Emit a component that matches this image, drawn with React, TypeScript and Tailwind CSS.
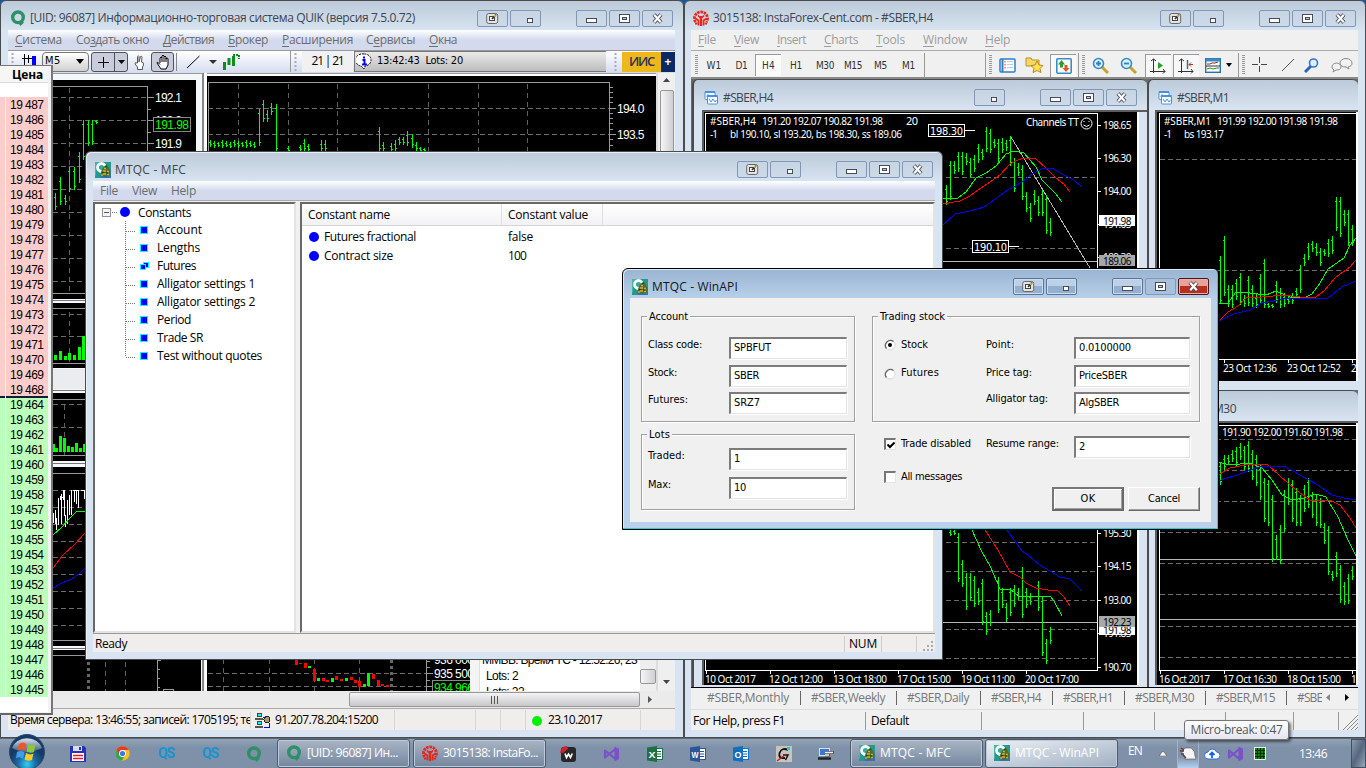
import React, { useLayoutEffect, useRef } from "react";

const SEGOE = "font-['Open_Sans','Noto_Sans',sans-serif]";
const TAHOMA = "font-['DejaVu_Sans_Condensed','DejaVu_Sans',sans-serif]";

/* Single-line text whose tracking is tuned so that it takes exactly w pixels. */
function Fit({ w, children, u = -1, className = "" }: { w: number; children: string; u?: number; className?: string }) {
  const ref = useRef<HTMLSpanElement>(null);
  useLayoutEffect(() => {
    const el = ref.current;
    if (!el) return;
    el.style.letterSpacing = "0px";
    const natural = el.getBoundingClientRect().width;
    el.style.letterSpacing = `${(w - natural) / children.length}px`;
  }, [w, children]);
  return (
    <span ref={ref} className={`inline-block shrink-0 whitespace-pre ${className}`}>
      {u < 0 ? children : (
        <>
          {children.slice(0, u)}
          <span className="underline underline-offset-2">{children[u]}</span>
          {children.slice(u + 1)}
        </>
      )}
    </span>
  );
}

/* ---------- icons ---------- */
const MtqcIcon = () => (
  <svg width="16" height="16" viewBox="0 0 16 16" className="shrink-0">
    <rect width="16" height="16" fill="#23998f" />
    <path d="M16 8v8H6l-1-3z" fill="#2f75b5" />
    <path d="M0 0h5L1 5v8l-1 1z" fill="#49b5a0" />
    <circle cx="6.500" cy="5.500" r="4" stroke="#f6fbfb" strokeWidth="2.800" fill="#3fa596" />
    <path d="M6 10l1.500-3.500L9.500 4l2.500-1.500L14 6l1.500 4-1 3.500-4.500 1.500-4-2z" fill="#4d6f2c" />
    <path d="M9 6.500h2M8 9h3M12 9.500h2M8 12h3M12 12.500h2M6 13h2" stroke="#d9ac30" strokeWidth="1.300" />
    <path d="M10 5l2-1M7 10.500h2M11 11h2" stroke="#1d3e22" strokeWidth="1" />
  </svg>
);
const QuikIcon = () => (
  <svg width="16" height="16" viewBox="0 0 16 16" className="shrink-0">
    <circle cx="8" cy="7.300" r="5.300" fill="none" stroke="#2f8f68" strokeWidth="3.400" />
    <path d="M6.500 12l5-1 2.500 1.500-3.500 3.500L9 14z" fill="#2f8f68" />
  </svg>
);
const InstaIcon = () => (
  <svg width="16" height="16" viewBox="0 0 16 16" className="shrink-0" fill="none" stroke="#e8261c">
    <path d="M8 16V6" strokeWidth="2.200" />
    <path d="M8 8.500L5 5.500M8 8.500l3-3M5.500 15.500V10.500L2.500 8.500M10.500 15.500V10.500l3-2" strokeWidth="1.700" />
    <path d="M2.600 12A6.500 6.500 0 1 1 13.400 12" strokeWidth="2.800" strokeDasharray="2.500 .8" />
    <path d="M2 13.500h2.500M11.500 13.500H14" strokeWidth="1.800" />
  </svg>
);
const ChildIcon = () => (
  <svg width="15" height="15" viewBox="0 0 15 15" className="shrink-0" fill="#fff" stroke="#4a90e0">
    <rect x="1" y="1.500" width="10" height="8" rx="1" />
    <path d="M1 2h10" strokeWidth="2" /><path d="M2.500 6.500l1.500-2 1.500 2" fill="none" />
    <rect x="3.500" y="5.500" width="10" height="8.500" rx="1" />
    <path d="M3.500 6h10" strokeWidth="2" />
    <path d="M5 9l2 3 2-3 2 3 1.500-2" fill="none" />
  </svg>
);

/* ---------- window chrome ---------- */
type Kind = "pin" | "tray" | "min" | "max" | "close";
function CapGlyph({ kind }: { kind: Kind }) {
  return (
    <svg width="29" height="15" viewBox="0 0 29 15" fill="none" shapeRendering="crispEdges">
      {kind === "pin" && (
        <g shapeRendering="auto">
          <rect x="8.700" y="2.500" width="11" height="10" rx="2" fill="#e4e4e4" stroke="#666" />
          <rect x="11.500" y="5.500" width="5" height="4" fill="#fff" stroke="#444" />
          <path d="M14 8l4-4.500" stroke="#333" strokeWidth="1.800" /><path d="M16 5.500l1.500-1.700" stroke="#f0cc30" strokeWidth="1.400" />
        </g>
      )}
      {kind === "tray" && <rect x="16.500" y="7.500" width="5" height="4" fill="#fff" stroke="#474b5c" />}
      {kind === "min" && <rect x="9.500" y="7.500" width="10" height="4" rx="1" fill="#fff" stroke="#474b5c" />}
      {kind === "max" && (<>
        <rect x="9.500" y="3.500" width="10" height="8" fill="#fff" stroke="#474b5c" />
        <rect x="12.500" y="6.500" width="4" height="2" fill="#b8c6d8" stroke="#474b5c" />
      </>)}
      {kind === "close" && (
        <g shapeRendering="auto">
          <path d="M11 3.500l7 8M18 3.500l-7 8" stroke="#474b5c" strokeWidth="4" />
          <path d="M11.200 3.800l6.600 7.400M17.800 3.800l-6.600 7.400" stroke="#fff" strokeWidth="2.200" />
        </g>
      )}
    </svg>
  );
}
function CapButton({ kind, active }: { kind: Kind; active?: boolean }) {
  const look = active
    ? kind === "close"
      ? "border-[#4c1620] bg-linear-to-b from-[#e5a399] from-45% to-[#b8301c] to-50% shadow-[inset_0_0_0_1px_#e8b0a4]"
      : kind === "max"
        ? "border-[#8299b8] bg-[#a9c0dc]"
        : "border-[#5c7596] bg-linear-to-b from-[#bdd0e6] from-45% to-[#93b0d0] to-50% shadow-[inset_0_0_0_1px_#c9dcf0]"
    : "border-[#8296b8] bg-[#c8d5e5]/60";
  return (
    <span className={`flex h-[17px] w-[31px] items-center justify-center rounded-[2px] border ${look}`}>
      <CapGlyph kind={kind} />
    </span>
  );
}
function CapButtons({ kinds = ["pin", "tray", "min", "max", "close"], active }: { kinds?: Kind[]; active?: boolean }) {
  return (
    <div className="ml-auto flex gap-[2px]">
      {kinds.map((k) => (
        <span key={k} className={k === "min" ? "ml-[33px]" : ""}>
          <CapButton kind={k} active={active} />
        </span>
      ))}
    </div>
  );
}

/* ---------- chart helpers ---------- */
function Plot({ x, y, w, h, children }: { x: number; y: number; w: number; h: number; children: React.ReactNode }) {
  return (
    <svg width={w} height={h} viewBox={`${x} ${y} ${w} ${h}`} className="block shrink-0" shapeRendering="crispEdges" fill="none">
      {children}
    </svg>
  );
}
const snap = (v: number) => Math.floor(v) + 0.5;
const barPath = (d: number[][]) =>
  d.map(([x, a, b]) => {
    const s = snap(x);
    const q = Math.min(4, (b - a) / 3);
    return `M${s} ${a}V${b}M${s - 1.5} ${snap(a + q)}h1.500M${s} ${snap(b - q)}h1.500`;
  }).join("");
const Bars = ({ d }: { d: number[][] }) => <path d={barPath(d)} stroke="#0f0" />;
const Line = ({ p, c }: { p: string; c: string }) => <polyline points={p} stroke={c} strokeWidth="1" />;
const HDash = ({ ys, x1, x2 }: { ys: number[]; x1: number; x2: number }) => (
  <path d={ys.map((y) => `M${x1} ${snap(y)}H${x2}`).join("")} stroke="#6c6c6c" strokeDasharray="5 3" />
);
const VDash = ({ xs, y1, y2 }: { xs: number[]; y1: number; y2: number }) => (
  <path d={xs.map((x) => `M${snap(x)} ${y1}V${y2}`).join("")} stroke="#606060" strokeDasharray="5 4" />
);
function Lab({ x, y, w, t, c = "#fff", s = 10, f = "Noto Sans" }: { x: number; y: number; w: number; t: string; c?: string; s?: number; f?: string }) {
  return <text x={x} y={y} textLength={w} fontSize={s} fill={c} fontFamily={`${f}, sans-serif`} xmlSpace="preserve">{t}</text>;
}
function Prices({ items }: { items: [string, number][] }) {
  return (<>
    {items.map(([t, y]) => (
      <g key={t}>
        <path d={`M1098 ${snap(y)}h3`} stroke="#fff" />
        <Lab x={1103} y={y + 4} w={28.500} t={t} />
      </g>
    ))}
  </>);
}
function Times({ items, tick, y }: { items: [string, number, number][]; tick: number; y: number }) {
  return (<>
    {items.map(([t, x, w]) => (
      <g key={t + x}>
        <path d={`M${x + 1.5} ${tick}v3`} stroke="#fff" />
        <Lab x={x} y={y} w={w} t={t} />
      </g>
    ))}
  </>);
}

/* ---------- QUIK charts ---------- */
const volA = [[55, 355], [60, 351], [65, 356], [69, 353], [74, 355], [79, 347], [83, 336]];
const volB = [[53, 444], [56, 448], [60, 436], [64, 438], [68, 446], [72, 447], [76, 443], [80, 448], [84, 444]];
const QuikLeft = () => (
  <Plot x={8} y={73} w={199} h={618}>
    <rect x="8" y="73" width="199" height="618" fill="#f4f8fb" />
    <path d="M8 73.500H203" stroke="#999" />
    <rect x="8" y="80" width="188" height="219" fill="#000" />
    <path d="M8 86.500H147.500V293.500H8" stroke="#999" />
    <HDash ys={[97, 120, 143, 166, 189, 212, 235, 258, 281]} x1={53} x2={147} />
    <VDash xs={[69]} y1={88} y2={293} />
    <path d="M148 97.500h6M148 120.500h6M148 143.500h6M148 109.500h3M148 132.500h3" stroke="#999" />
    <Bars d={[[55, 193, 210], [60, 177, 205], [65, 195, 205], [69, 167, 192], [74, 167, 190], [79, 152, 183], [83, 120, 160], [88, 120, 146], [92, 120, 145], [96, 120, 124]]} />
    <Lab x={155} y={102} w={27} t="192.1" s={12} f="Liberation Sans" />
    <Lab x={155} y={125} w={27} t="192.0" s={12} f="Liberation Sans" />
    <Lab x={155} y={148} w={27} t="191.9" s={12} f="Liberation Sans" />
    <rect x="153.500" y="117.500" width="37" height="14" fill="#000" stroke="#888" />
    <Lab x={155} y={129} w={34} t="191.98" c="#0f0" s={12} f="Liberation Sans" />
    <path d="M8 300.500H85M8 390.500H85" stroke="#777" />
    <rect x="8" y="303" width="188" height="65" fill="#000" />
    <path d="M8 308.500H85M8 363.500H85" stroke="#999" />
    <HDash ys={[314, 336]} x1={53} x2={86} />
    <VDash xs={[69]} y1={312} y2={363} />
    <path d={volA.map(([x, y]) => `M${x + 0.5} ${y}V360`).join("")} stroke="#0f0" strokeWidth="3" />
    <rect x="8" y="369" width="188" height="20" fill="#ebecef" />
    <rect x="8" y="393" width="188" height="68" fill="#000" />
    <path d="M8 399.500H86M8 455.500H86" stroke="#999" />
    <HDash ys={[404, 427]} x1={53} x2={86} />
    <VDash xs={[64]} y1={405} y2={455} />
    <path d={volB.map(([x, y]) => `M${x + 0.5} ${y}V452`).join("")} stroke="#0f0" strokeWidth="3" />
    <path d="M8 463.500H86" stroke="#777" />
    <rect x="8" y="467" width="188" height="179" fill="#000" />
    <path d="M8 473.500H86M8 640.500H86" stroke="#999" />
    <HDash ys={[490, 507, 524, 541, 557, 574, 591, 608, 625]} x1={53} x2={86} />
    <path d="M53.500 513v10M55.500 510v14M56.500 518v12M58.500 498v27M60.500 496v4M61.500 494v30M63.500 490v10M64.500 490v26M65.500 515v12M67.500 500v24M69.500 495v20M71.500 490v25M74.500 490v12M76.500 490v14M78.500 490v18M80.500 490h5M84.500 490v9M60 497h4M73 490.500h5" stroke="#fff" />
    <Line c="#0f0" p="53,535 62,527 70,518 77,511 85,512" />
    <Line c="#f00" p="53,568 63,555 75,544 85,533" />
    <Line c="#00f" p="53,588 62,583 72,579 79,574 85,568" />
    <path d="M8 648.500H86" stroke="#777" />
    <rect x="8" y="650" width="193" height="41" fill="#000" />
    <path d="M8 655.500H157M157.500 655V691M157 660.500h4M157 669.500h3M157 678.500h3M157 687.500h3M163 691v-1.500h10v2" stroke="#999" />
    <path d="M88.500 662V691" stroke="#666" strokeWidth="3" strokeDasharray="3 3" />
    <VDash xs={[105, 125]} y1={662} y2={691} />
    <path d="M203 73V691" stroke="#888" strokeWidth="2" />
    <path d="M205.500 73V691" stroke="#fff" strokeWidth="2" />
  </Plot>
);
const candles: [number, number, number, string][] = [
  [295, 659, 665, "#f00"], [299, 663, 664, "#f00"], [304, 663, 668, "#f00"], [308, 666, 668, "#0f0"], [313, 669, 681, "#f00"], [317, 678, 681, "#0f0"],
  [322, 678, 681, "#f00"], [326, 680, 682, "#f00"], [331, 678, 682, "#0f0"], [335, 676, 680, "#f00"], [340, 679, 681, "#f00"], [345, 678, 681, "#0f0"],
  [350, 677, 680, "#f00"], [354, 680, 683, "#f00"], [358, 681, 687, "#f00"], [363, 684, 687, "#0f0"], [367, 673, 686, "#0f0"], [372, 674, 679, "#f00"],
  [377, 680, 686, "#f00"], [381, 684, 686, "#f00"], [386, 685, 687, "#f00"],
];
const tickRow = Array.from({ length: 12 }, (_, i) => [210 + i * 4, 140 + (i % 3), 147 + (i % 2)]);
const QuikRight = () => (
  <Plot x={207} y={73} w={449} h={586}>
    <rect x="207" y="73" width="449" height="586" fill="#fff" />
    <path d="M207 73.500H656" stroke="#999" />
    <rect x="207" y="76" width="449" height="583" fill="#000" />
    <path d="M208.500 152V82.500H609.500V152" stroke="#999" />
    <HDash ys={[108, 134]} x1={208} x2={609} />
    <VDash xs={[238, 288, 337, 428, 478, 527]} y1={84} y2={152} />
    <path d="M610 108.500h6M610 134.500h6M610 87.500h3M610 92.500h3M610 97.500h3M610 102.500h3M610 113.500h3M610 118.500h3M610 123.500h3M610 129.500h3M610 139.500h3M610 145.500h3" stroke="#999" />
    <Bars d={tickRow} />
    <Bars d={[[259, 109, 146], [263, 100, 122], [267, 110, 122], [271, 103, 115], [276, 104, 152], [288, 146, 152], [300, 145, 152], [304, 139, 152], [308, 144, 152], [321, 140, 152], [325, 140, 152]]} />
    <Bars d={[[379, 127, 152], [383, 142, 152], [391, 143, 152], [395, 140, 152], [399, 137, 145], [403, 137, 145], [407, 131, 146], [412, 134, 148], [416, 142, 152], [420, 147, 152], [424, 148, 152]]} />
    <Lab x={617} y={113} w={27.500} t="194.0" s={12} f="Liberation Sans" />
    <Lab x={617} y={139} w={27.500} t="193.5" s={12} f="Liberation Sans" />
  </Plot>
);
const QuikRightBottom = () => (
  <Plot x={207} y={659} w={263} h={32}>
    <rect x="207" y="659" width="263" height="32" fill="#000" />
    <HDash ys={[673, 686]} x1={208} x2={427} />
    <VDash xs={[223, 269, 314, 359]} y1={659} y2={691} />
    <path d="M391.500 660V691" stroke="#666" strokeWidth="3" strokeDasharray="3 3" />
    {candles.map(([x, a, b, c]) => <rect key={x} x={x} y={a} width="3" height={b - a} fill={c} />)}
    <path d="M426.500 659V691M427 661.500h3M427 667.500h3M427 673.500h6M427 680.500h3M427 686.500h6" stroke="#999" />
    <Lab x={434} y={664} w={40} t="936 000" s={12} f="Liberation Sans" />
    <Lab x={434} y={678} w={40} t="935 500" s={12} f="Liberation Sans" />
    <rect x="432.500" y="680.500" width="50" height="13" fill="#000" stroke="#888" />
    <Lab x={434} y={692} w={40} t="934 966" c="#0f0" s={12} f="Liberation Sans" />
  </Plot>
);

/* ---------- QUIK window ---------- */
const quikMenu: [string, number, number, number][] = [
  ["Система", 47, 0, 14], ["Создать окно", 73, 2, 14], ["Действия", 51, 0, 14], ["Брокер", 40, 0, 14],
  ["Расширения", 71, 0, 13], ["Сервисы", 49, 1, 14], ["Окна", 28, 0, 0],
];
const Grip = () => (
  <svg width="3" height="20" className="shrink-0"><path d="M1.500 1V20" stroke="#a8aab8" strokeWidth="2" strokeDasharray="2 2" /></svg>
);
function QuikWindow() {
  return (
    <section className="absolute top-0 left-0 flex h-[738px] w-[684px] flex-col rounded-t-md border border-[#4b4b4b] bg-[#d8e4f1] bg-linear-to-b from-[#bccad9] to-[#d8e4f1] to-[30px] px-[7px] pb-[7px]">
      <header className="flex h-[29px] shrink-0 items-center pt-[6px] pr-[3px] pb-[1px] pl-[2px] text-xs text-[#3e4450]">
        <QuikIcon />
        <Fit w={385} className="ml-1">[UID: 96087] Информационно-торговая система QUIK (версия 7.5.0.72)</Fit>
        <CapButtons />
      </header>
      <nav className="flex h-5 w-[667px] shrink-0 items-center bg-linear-to-b from-white to-[#d3daee] to-50% pl-[7px] text-xs text-[#6d6d6d]">
        {quikMenu.map(([t, w, u, gap]) => (
          <span key={t} className="flex"><Fit w={w} u={u}>{t}</Fit><i className="block" style={{ width: gap }} /></span>
        ))}
      </nav>
      <div className="flex h-[23px] w-[667px] shrink-0 items-center border-t border-[#9a9a9a] bg-linear-to-b from-white to-[#d5dcf0] pb-px text-xs text-black">
        <span className="ml-[3px]"><Grip /></span>
        <svg width="20" height="20" className="ml-[3px] shrink-0" fill="none" shapeRendering="crispEdges">
          <path d="M7.500 2v18M5 6.500h12M11.500 3v8" stroke="#000" /><path d="M10 14h4v5" stroke="#e00" strokeWidth="2" /><rect x="15" y="4" width="4" height="14" fill="#00f" />
        </svg>
        <div className={`flex h-5 w-[47px] items-center justify-between rounded-sm border border-[#777] bg-linear-to-b from-white to-[#d0d0d0] pr-1 pl-[2px] ${TAHOMA} ml-[5px] text-[11px]`}>
          <Fit w={16}>M5</Fit>
          <svg width="8" height="5"><path d="M0 0h8L4 5z" fill="#000" /></svg>
        </div>
        <div className="ml-[2px] flex h-5 w-[37px] items-center rounded-[3px] border border-[#4d5060] bg-[#c9cddb]">
          <svg width="22" height="18" shapeRendering="crispEdges"><path d="M11.500 4v11M6 9.500h11" stroke="#000" /></svg>
          <span className="flex h-full flex-1 items-center justify-center border-l border-[#4d5060]"><svg width="7" height="4"><path d="M0 0h7L3.500 4z" /></svg></span>
        </div>
        <svg width="14" height="18" viewBox="0 0 14 18" className="ml-[4px] shrink-0" fill="#fff" stroke="#555">
          <path d="M5.500 10V3.500q1-1.500 1.500 0V9l1.500-5.500q1.500-1 1.500 1L9.500 9q2.500 0 2 3l-1 2v2.500h-5V14L3 11q-.5-2 2.500-1" />
        </svg>
        <div className="ml-[5px] flex h-5 w-[23px] items-center justify-center rounded-[3px] border border-[#4d5060] bg-[#c9cddb]">
          <svg width="14" height="16" viewBox="0 0 14 16" fill="#fff" stroke="#000">
            <path d="M4 9V4q1-2 2 0V2q1-2 2 0v1q1-2 2 0v2q2-2 2 0v6l-2 4H5L1 9q0-2 3 1.500M6 4v4M8 3v5M10 4v4" />
          </svg>
        </div>
        <span className="ml-[2px] h-[18px] w-px bg-[#888]" />
        <svg width="15" height="14" className="ml-[9px] shrink-0"><path d="M1 13L13.500 1" stroke="#000" /></svg>
        <svg width="8" height="4" className="ml-2 shrink-0"><path d="M0 0h8L4 4z" fill="#333" /></svg>
        <svg width="17" height="17" className="ml-[6px] shrink-0" fill="#0a8f1c"><path d="M0 9h3v8H0zM4.500 5h3v7h-3zM9 3h3v10H9z" /><path d="M10 2h6v4" fill="none" stroke="#0a8f1c" strokeWidth="2" strokeDasharray="2 1" /></svg>
        <span className="ml-[50px] h-[21px] w-px bg-[#999]" />
        <span className="ml-[3px]"><Grip /></span>
        <div className="ml-[5px] flex h-[21px] w-[51px] items-center justify-center bg-[#f1f1f3] pb-px"><Fit w={32}>21 | 21</Fit></div>
        <div className={`ml-px flex h-[21px] w-[252px] items-center border border-r-0 border-[#777] bg-linear-to-b from-[#eaeaea] to-[#bdbdbd] pl-[1px] ${TAHOMA} text-[11px]`}>
          <svg width="16" height="17" viewBox="0 0 16 17"><path d="M8 1a7 6 0 0 0-3 12l3 3 1-3A6.500 6 0 0 0 8 1z" fill="#fff" stroke="#000" strokeDasharray="2 1" /><path d="M8 3.500v2M6.500 7h2v4M6 11.500h5" stroke="#00f" strokeWidth="2" fill="none" /></svg>
          <Fit w={86} className="ml-[5px]">13:42:43  Lots: 20</Fit>
        </div>
        <span className="ml-2"><Grip /></span>
        <span className="ml-[5px] flex h-5 w-[39px] items-center justify-center bg-[#edb81c] text-[13px] font-semibold text-[#2c3355]"><Fit w={25}>ИИС</Fit></span>
        <span className="flex h-5 flex-1 items-center justify-center bg-[#0b2a63] text-[12px] font-bold text-white">+</span>
      </div>
      <div className="flex h-[618px] w-[667px] shrink-0 bg-[#f0f0f0]">
        <QuikLeft />
        <div className="flex w-[449px] flex-col">
          <QuikRight />
          <div className="flex h-8 overflow-hidden">
            <QuikRightBottom />
            <div className="w-[10px] shrink-0 border-r border-[#ddd] bg-[#f4f4f4]" />
            <div className="flex w-[160px] shrink-0 flex-col items-start overflow-hidden bg-white pl-[2px] font-['Liberation_Sans',sans-serif] text-[12px] leading-[14px] text-black">
              <Fit w={155} className="-mt-[6px] h-[14px]">MMBB: Время ТС - 12:52:26; 23</Fit>
              <Fit w={32} className="mt-[2px] ml-1 h-[14px]">Lots: 2</Fit>
              <Fit w={38} className="mt-[2px] ml-1 h-[14px]">Lots: 22</Fit>
            </div>
            <div className="flex-1 bg-[#eee] pt-[10px]"><div className="h-[15px] rounded-[2px] border border-[#979797] bg-linear-to-r from-[#f5f5f5] to-[#d0d0d4]" /></div>
          </div>
        </div>
        <div className="flex flex-1 flex-col items-center border-l-2 border-[#ddd] bg-[#efefef] pt-[5px]">
          <svg width="7" height="4"><path d="M0 4h7L3.500 0z" fill="#444" /></svg>
          <div className="mt-[8px] h-[500px] w-[14px] rounded-[2px] border border-[#979797] bg-linear-to-r from-[#f5f5f5] to-[#cfcfd3]" />
          <svg width="7" height="4" className="mt-auto mb-[7px]"><path d="M0 0h7L3.500 4z" fill="#444" /></svg>
        </div>
      </div>
      <div className="flex h-[17px] w-[667px] shrink-0 items-center bg-[#ebebeb] pl-[341px]">
        <div className="flex h-[15px] w-[291px] items-center justify-center gap-[2px] rounded-[2px] border border-[#979797] bg-linear-to-b from-[#f4f4f4] to-[#c8c8cc]">
          <i className="h-2 w-px bg-[#555]" /><i className="h-2 w-px bg-[#555]" /><i className="h-2 w-px bg-[#555]" />
        </div>
        <svg width="4" height="7" className="ml-2"><path d="M0 0v7L4 3.500z" fill="#555" /></svg>
      </div>
      <footer className="flex h-[22px] w-[667px] shrink-0 items-center border-t border-[#aaa] bg-[#f0eded] pl-[2px] text-xs text-black">
        <div className="w-[240px] overflow-hidden"><Fit w={275}>Время сервера: 13:46:55; записей: 1705195; текущая</Fit></div>
        <div className="flex w-[144px] items-center border-l border-[#d8d4d4] pl-[4px]">
          <svg width="17" height="16" shapeRendering="crispEdges"><rect x="2.500" y="1.500" width="4" height="3" fill="#0ff" stroke="#444" /><rect x="2.500" y="9.500" width="4" height="3" fill="#0ff" stroke="#444" /><path d="M0 6.500h8M0 14.500h8" stroke="#555" strokeWidth="2" /><circle cx="12" cy="7.500" r="3" fill="#a89c60" stroke="#222" /><path d="M8 5.500h3" stroke="#00f" /><path d="M14.500 11v4H9" stroke="#00f" fill="none" /></svg>
          <Fit w={103} className="ml-[3px]">91.207.78.204:15200</Fit>
        </div>
        <i className="h-5 w-[81px] border-l border-[#d8d4d4]" /><i className="h-5 w-[25px] border-l border-[#d8d4d4]" /><i className="h-5 w-[25px] border-l border-[#d8d4d4]" />
        <div className="flex h-5 w-[115px] items-center border-l border-[#d8d4d4] pl-[6px]">
          <span className="mt-[2px] size-[10px] rounded-full bg-[#00f000]" />
          <Fit w={54} className="ml-[6px]">23.10.2017</Fit>
        </div>
        <i className="h-5 flex-1 border-l border-[#d8d4d4]" />
      </footer>
    </section>
  );
}

/* ---------- price ladder ---------- */
const asks = Array.from({ length: 20 }, (_, i) => 487 - i);
const bids = Array.from({ length: 20 }, (_, i) => 464 - i);
function Ladder() {
  return (
    <section className="absolute top-[65px] left-0 flex h-[650px] w-[53px] border-t border-r-2 border-b-2 border-t-[#777] border-r-[#777] border-b-[#666] bg-[#f2f2f2] font-['Liberation_Sans',sans-serif] text-[12px] leading-[15px] text-black">
      <div className="w-[48px] pb-[2px]">
        <div className="flex h-[17px] items-center border-b border-[#ddd] bg-[#f6f6f6] pt-px pl-[12px] font-['Noto_Sans','Open_Sans',sans-serif] font-bold"><Fit w={31}>Цена</Fit></div>
        <div className="h-[14px] bg-white" />
        <div className="flex">
          <div className="mr-px w-[5px] shrink-0"><div className="h-[299px] bg-[#ffcccc]" /><div className="h-[2px] bg-[#102030]" /><div className="h-[299px] bg-[#bbffbb]" /></div>
          <div className="flex-1">
            <div className="border-b-2 border-[#102030] bg-[#ffcccc]">
              {asks.map((n, i) => <div key={n} className={`${i === 19 ? "h-[14px]" : "h-[15px]"} pt-px pl-[4px]`}><Fit w={33.5}>{`19 ${n}`}</Fit></div>)}
            </div>
            <div className="bg-[#bbffbb]">
              {bids.map((n, i) => <div key={n} className={`${i === 19 ? "h-[14px]" : "h-[15px]"} pl-[4px]`}><Fit w={33.5}>{`19 ${n}`}</Fit></div>)}
            </div>
          </div>
        </div>
        <div className="h-[15px] bg-white" />
      </div>
    </section>
  );
}

/* ---------- InstaForex charts ---------- */
const Edge = ({ x, y, w, h }: { x: number; y: number; w: number; h: number }) => <rect x={x} y={y} width={w} height={h} fill="#000" />;
const ChartH4 = () => (
  <Plot x={704} y={112} w={433} h={269}>
    <Edge x={704} y={112} w={433} h={269} />
    <path d="M705.500 381V113.500H1097.500V381" stroke="#fff" />
    <HDash ys={[177, 248]} x1={706} x2={1097} />
    <path d="M706 261.500H1097" stroke="#b8b8b8" />
    <path d="M1011 137L1090 268" stroke="#b8b8b8" />
    <Bars d={[[946, 185, 205], [950, 161, 200], [954, 161, 174], [958, 152, 172], [962, 152, 175], [966, 153, 165], [970, 158, 178], [974, 155, 172], [978, 144, 163], [982, 149, 160], [986, 127, 152], [990, 129, 153], [994, 139, 148], [998, 139, 162], [1002, 138, 153], [1006, 140, 151], [1010, 136, 166], [1014, 158, 192], [1018, 163, 176], [1022, 165, 200], [1026, 192, 212], [1030, 203, 222], [1034, 190, 205], [1038, 196, 216], [1042, 190, 216], [1046, 195, 234], [1050, 218, 236]]} />
    <Line c="#0f0" p="943,198 958,198 966,192 976,178 986,173 996,166 1006,154 1014,151 1024,153 1030,160 1036,167 1042,180 1050,188 1056,194 1062,202" />
    <Line c="#f00" p="943,204 960,201 970,196 978,190 990,182 1000,175 1010,164 1018,160 1024,158 1036,159 1046,168 1056,178 1064,184 1070,192" />
    <Line c="#00f" p="943,225 955,214 970,211 984,207 994,200 1008,190 1022,182 1032,174 1042,169 1052,168 1062,174 1074,180 1082,187" />
    <Lab x={710} y={125} w={46} t="#SBER,H4" />
    <Lab x={762} y={125} w={121} t="191.20 192.07 190.82 191.98" />
    <Lab x={906} y={125} w={12} t="20" s={11} />
    <Lab x={710} y={138} w={8} t="-1" />
    <Lab x={730} y={138} w={172} t="bl 190.10, sl 193.20, bs 198.30, ss 189.06" />
    <rect x="928.500" y="124.500" width="36" height="12" fill="#000" stroke="#fff" /><path d="M965 130.500h10" stroke="#fff" />
    <Lab x={930} y={135} w={33} t="198.30" s={11} f="DejaVu Sans Condensed" />
    <rect x="972.500" y="240.500" width="36" height="12" fill="#000" stroke="#fff" /><path d="M1009 246.500h10" stroke="#fff" />
    <Lab x={974} y={251} w={33} t="190.10" s={11} f="DejaVu Sans Condensed" />
    <Lab x={1026} y={126} w={53} t="Channels TT" />
    <g shapeRendering="auto" stroke="#fff"><circle cx="1086.500" cy="123.500" r="5.500" /><path d="M1084 122v-1M1089 122v-1M1083.500 125q3 3 6 0" /></g>
    <Prices items={[["198.65", 125], ["196.30", 158], ["194.00", 191], ["191.65", 224], ["189.30", 257]]} />
    <rect x="1099" y="215" width="36" height="11" fill="#fff" /><Lab x={1103} y={224.500} w={28.500} t="191.98" c="#000" />
    <rect x="1099" y="255" width="36" height="11" fill="#a8a8a8" /><Lab x={1103} y={264.500} w={28.500} t="189.06" c="#000" />
  </Plot>
);
const ChartBottomLeft = () => (
  <Plot x={704} y={423} w={433} h={262}>
    <Edge x={704} y={423} w={433} h={262} />
    <path d="M705.500 425V670.500H1097.500V425" stroke="#fff" />
    <HDash ys={[542, 571, 600, 629, 658]} x1={706} x2={1097} />
    <path d="M706 622.500H1097" stroke="#b8b8b8" />
    <Bars d={[[950, 530, 536], [954, 530, 535], [958, 533, 582], [962, 560, 587], [966, 573, 610], [970, 573, 601], [974, 576, 607], [978, 588, 605], [982, 579, 625], [986, 612, 635], [990, 610, 626], [998, 577, 613], [1002, 588, 608], [1006, 603, 622], [1010, 588, 616], [1014, 585, 607], [1018, 588, 600], [1022, 567, 618], [1026, 588, 608], [1030, 593, 605], [1038, 581, 611], [1042, 597, 656], [1046, 639, 664], [1050, 627, 644]]} />
    <Line c="#0f0" p="972,530 982,552 990,566 997,582 1000,589 1010,589 1020,597 1030,596 1040,596 1050,596 1054,601 1062,616" />
    <Line c="#f00" p="985,530 998,550 1010,572 1020,577 1026,583 1036,588 1048,590 1058,591 1064,597 1070,606" />
    <Line c="#00f" p="1007,530 1022,551 1028,555 1040,565 1050,571 1060,577 1070,579 1076,585 1082,591" />
    <Prices items={[["195.30", 533], ["194.15", 566], ["193.00", 600], ["191.85", 633], ["190.70", 667]]} />
    <rect x="1099" y="625" width="36" height="10" fill="#fff" /><Lab x={1103} y={633.500} w={28.500} t="191.98" c="#000" />
    <rect x="1099" y="616" width="36" height="11" fill="#a8a8a8" /><Lab x={1103} y={625.500} w={28.500} t="192.23" c="#000" />
    <Times tick={671} y={683} items={[["10 Oct 2017", 705, 51], ["12 Oct 12:00", 769, 54], ["13 Oct 18:00", 833, 54], ["17 Oct 15:00", 897, 54], ["19 Oct 11:00", 961, 54], ["20 Oct 17:00", 1025, 54]]} />
  </Plot>
);
const ChartM1 = () => (
  <Plot x={1157} y={112} w={199} h={269}>
    <Edge x={1157} y={112} w={199} h={269} />
    <path d="M1356 113.500H1159.500V359.500H1356" stroke="#fff" />
    <HDash ys={[159, 270]} x1={1160} x2={1356} />
    <Bars d={[[1220, 256, 304], [1224, 236, 296], [1228, 285, 307], [1232, 285, 308], [1236, 279, 300], [1240, 273, 305], [1244, 295, 307], [1248, 276, 306], [1252, 285, 307], [1256, 294, 308], [1260, 274, 304], [1264, 259, 308], [1268, 303, 308], [1272, 304, 308], [1276, 281, 303], [1280, 288, 308], [1284, 293, 307], [1288, 297, 304], [1292, 293, 304], [1296, 288, 297], [1300, 265, 293], [1304, 254, 266], [1308, 243, 260], [1312, 241, 252], [1316, 243, 256], [1320, 248, 266], [1324, 249, 256], [1328, 239, 257], [1332, 236, 254], [1336, 197, 231], [1340, 197, 237], [1344, 210, 226], [1348, 210, 246], [1352, 225, 246]]} />
    <Line c="#0f0" p="1218,304 1228,303 1236,292 1250,293 1266,295 1276,291 1290,297 1304,298 1312,294 1320,283 1328,269 1344,258 1350,245 1356,238" />
    <Line c="#f00" p="1219,321 1228,312 1238,306 1246,298 1262,297 1284,295 1300,297 1316,297 1324,291 1336,277 1350,267 1356,260" />
    <Line c="#00f" p="1219,321 1234,314 1250,310 1262,303 1284,299 1300,298 1328,298 1342,287 1356,281" />
    <Lab x={1164} y={125} w={47} t="#SBER,M1" />
    <Lab x={1217} y={125} w={121} t="191.99 192.00 191.98 191.98" />
    <Lab x={1164} y={138} w={8} t="-1" /><Lab x={1184} y={138} w={40} t="bs 193.17" />
    <Times tick={360} y={372} items={[["23 Oct 12:36", 1223, 54], ["23 Oct 12:52", 1287, 54], ["23 Oct 13:08", 1351, 54]]} />
  </Plot>
);
const ChartM30 = () => (
  <Plot x={1157} y={423} w={199} h={262}>
    <Edge x={1157} y={423} w={199} h={262} />
    <path d="M1356 425.500H1159.500V670.500H1356" stroke="#fff" />
    <HDash ys={[439, 470, 501, 532, 563, 594, 626, 657]} x1={1160} x2={1356} />
    <path d="M1160 559.500H1356M1160 619.500H1356" stroke="#b8b8b8" />
    <Bars d={[[1220, 462, 485], [1224, 455, 470], [1228, 455, 465], [1232, 450, 462], [1236, 447, 466], [1240, 443, 460], [1244, 446, 470], [1248, 441, 472], [1252, 450, 480], [1256, 455, 486], [1260, 465, 500], [1264, 478, 522], [1268, 480, 526], [1272, 495, 562], [1276, 535, 560], [1280, 525, 564], [1284, 490, 532], [1288, 478, 505], [1292, 480, 522], [1296, 488, 526], [1300, 495, 526], [1304, 485, 512], [1308, 478, 508], [1312, 492, 518], [1316, 495, 526], [1320, 498, 528], [1324, 523, 544], [1328, 526, 575], [1332, 571, 581], [1336, 552, 577], [1340, 565, 603], [1344, 582, 605], [1348, 574, 604], [1352, 566, 580]]} />
    <Line c="#0f0" p="1218,462 1230,465 1250,463 1262,468 1272,480 1282,495 1292,500 1304,498 1316,494 1326,497 1338,517 1348,540 1356,556" />
    <Line c="#f00" p="1218,475 1230,468 1250,464 1268,465 1280,476 1296,490 1310,500 1330,500 1340,505 1350,518 1356,528" />
    <Line c="#00f" p="1218,481 1240,474 1262,466 1284,466 1300,475 1318,485 1332,495 1344,498 1356,500" />
    <Lab x={1222} y={436} w={121} t="191.90 192.00 191.60 191.98" />
    <Times tick={671} y={683} items={[["16 Oct 2017", 1159, 51], ["17 Oct 16:30", 1223, 54], ["18 Oct 15:00", 1287, 54], ["19 Oct 13:30", 1351, 54]]} />
  </Plot>
);
function Child({ title, w, kinds, wide, children }: { title: string; w: number; kinds?: Kind[]; wide?: boolean; children: React.ReactNode }) {
  return (
    <article className="flex flex-1 flex-col rounded-t-md border-t border-l-2 border-[#4b4b4b] bg-[#d8e4f1] bg-linear-to-b from-[#bccad9] to-[#d8e4f1] to-[30px]">
      <header className={`flex h-[30px] shrink-0 items-center pt-[5px] pr-[10px] text-xs text-[#3e4450] ${wide ? "pl-[10px]" : "pl-[9px]"}`}>
        <ChildIcon /><Fit w={w} className="ml-1">{title}</Fit>
        {kinds && <div className="ml-auto flex"><CapButtons kinds={kinds} /></div>}
      </header>
      <div className={`flex border-t-2 border-l-2 border-[#5c5c5c] ${wide ? "ml-[8px]" : "ml-[6px]"}`}>{children}<i className="w-[2px] bg-white" /></div>
    </article>
  );
}
const tfs: [string, number, number][] = [["W1", 15, 28], ["D1", 12, 27], ["H4", 13, 26], ["H1", 12, 30], ["M30", 18, 28], ["M15", 18, 28], ["M5", 13, 27], ["M1", 13, 29]];
const instaMenu: [string, number, number][] = [["File", 18, 18], ["View", 25, 18], ["Insert", 29, 18], ["Charts", 34, 18], ["Tools", 29, 18], ["Window", 44, 18], ["Help", 25, 0]];
const chartTabs: [string, number][] = [["Monthly", 82], ["Weekly", 74], ["Daily", 62], ["H4", 50], ["H1", 50], ["M30", 59], ["M15", 59]];
const DotBtn = ({ children }: { children: React.ReactNode }) => (
  <span className="flex h-[23px] w-[26px] shrink-0 items-center justify-center border-t border-l border-[#999] bg-[#f8f8f8]">{children}</span>
);
const VSep = () => (
  <svg width="3" height="20" className="shrink-0"><path d="M1.500 0V20" stroke="#999" strokeWidth="3" strokeDasharray="1 1" shapeRendering="crispEdges" /></svg>
);
const Magnifier = ({ minus }: { minus?: boolean }) => (
  <svg width="17" height="17" viewBox="0 0 17 17" className="shrink-0">
    <path d="M10 10l6 6" stroke="#caa12c" strokeWidth="3" /><circle cx="6.500" cy="6.500" r="5" fill="#d8f0fb" stroke="#3b8ac4" strokeWidth="1.600" />
    <path d={minus ? "M4 6.500h5" : "M4 6.500h5M6.500 4v5"} stroke="#2e7fc0" strokeWidth="1.800" />
  </svg>
);
function InstaWindow() {
  return (
    <section className="absolute top-0 left-[684px] flex h-[738px] w-[682px] flex-col rounded-t-md border border-[#4b4b4b] bg-[#d8e4f1] bg-linear-to-b from-[#bccad9] to-[#d8e4f1] to-[30px] pr-[7px] pb-[7px] pl-[6px]">
      <header className="flex h-[29px] shrink-0 items-center pt-[6px] pr-[2px] pb-[1px] pl-[2px] text-xs text-[#3e4450]">
        <InstaIcon /><Fit w={220} className="ml-1">3015138: InstaForex-Cent.com - #SBER,H4</Fit><CapButtons />
      </header>
      <div className="flex h-[700px] w-[667px] shrink-0 flex-col overflow-hidden bg-[#f0f0f0]">
        <nav className="flex h-[21px] shrink-0 items-center border-b border-[#aaa] pl-[7px] text-xs text-[#9c9c9c]">
          {instaMenu.map(([t, w, gap]) => <span key={t} className="flex"><Fit w={w} u={0}>{t}</Fit><i className="block" style={{ width: gap }} /></span>)}
        </nav>
        <div className="flex h-7 shrink-0 items-center border-b-2 border-[#8a8a8a] pt-[2px] pl-1">
          <VSep />
          <div className="ml-[2px] flex font-['DejaVu_Sans_Condensed',sans-serif] text-[10px] text-[#333]">
            {tfs.map(([t, w, cell]) => (
              <span key={t} style={{ width: cell }} className={`flex h-[22px] items-center justify-center ${t === "H4" ? "border-t border-l border-[#999] bg-[#fafafa]" : "pt-px"}`}><Fit w={w}>{t}</Fit></span>
            ))}
          </div>
          <i className="ml-px h-6 w-px bg-[#999]" /><i className="ml-[60px] h-6 w-px bg-[#999]" />
          <span className="ml-[3px]"><VSep /></span>
          <svg width="17" height="15" viewBox="0 0 17 15" className="ml-[7px] shrink-0"><rect x="1" y="1" width="15" height="13" rx="1" fill="#fff" stroke="#2d7ec4" strokeWidth="1.500" /><path d="M3.500 1v13" stroke="#2d7ec4" strokeWidth="2" /><path d="M8 3.500h6M8 6.500h6M8 9.500h6" stroke="#bcd" /><path d="M6 3v9" stroke="#e33" strokeDasharray="1.500 1.500" /></svg>
          <svg width="20" height="18" viewBox="0 0 20 18" className="ml-[9px] shrink-0"><path d="M1 2h5l1 2h7v6H1z" fill="#f8d860" stroke="#b8922a" /><path d="M12 5l2 4 4 .5-3 3 1 4-4-2-4 2 1-4-3-3 4-.5z" fill="#ffe14a" stroke="#b8862a" /></svg>
          <span className="ml-[5px]"><DotBtn><svg width="16" height="16" viewBox="0 0 16 16"><rect x=".8" y=".8" width="14.400" height="14.400" rx="1" fill="#fff" stroke="#3b8ac4" strokeWidth="1.600" /><path d="M2 6.500l3.500-4.500 3.500 4.500H7v3H4v-3z" fill="#2a9d2a" /><path d="M6.500 10l3.500 4 3.500-4h-2V7h-3v3z" fill="#e2552c" /></svg></DotBtn></span>
          <i className="ml-[2px] h-6 w-px bg-[#999]" /><span className="ml-[3px]"><VSep /></span>
          <span className="ml-[7px]"><Magnifier /></span><span className="ml-[11px]"><Magnifier minus /></span>
          <span className="ml-[8px] flex gap-[2px]">
            <DotBtn><svg width="17" height="16" fill="none" stroke="#333"><path d="M3.500 1v14M1 3l2.500-2L6 3M0 13.500h15M13 11l2 2.500-2 2" /><path d="M8 4v7l5-3.500z" fill="#2a9d2a" stroke="none" /></svg></DotBtn>
            <DotBtn><svg width="17" height="16" fill="none" stroke="#333"><path d="M3.500 1v14M1 3l2.500-2L6 3M0 13.500h15M13 11l2 2.500-2 2" /><path d="M9.500 2v9" stroke="#2d6ea4" strokeWidth="1.500" /><path d="M15 6.500h-4M13 4.500l-2 2 2 2" stroke="#c0391c" /></svg></DotBtn>
          </span>
          <svg width="16" height="15" viewBox="0 0 16 15" className="ml-[6px] shrink-0"><rect x=".7" y=".7" width="14.600" height="13.600" fill="#fff" stroke="#2d6ea4" strokeWidth="1.400" /><path d="M1 2h14" stroke="#3b8ac4" strokeWidth="3" /><path d="M2 6h3l2-1h3l3-1" stroke="#8b2a1a" fill="none" /><path d="M2 11l3-1 3 1 4-1h2" stroke="#2a8d2a" fill="none" /><path d="M1 8h14" stroke="#333" /></svg>
          <svg width="6" height="4" className="ml-[5px] shrink-0"><path d="M0 0h6L3 4z" /></svg>
          <i className="ml-[6px] h-6 w-px bg-[#999]" /><span className="ml-[3px]"><VSep /></span>
          <svg width="16" height="16" className="ml-[7px] shrink-0" shapeRendering="crispEdges"><path d="M7.500 0v6M7.500 9v6M0 7.500h6M9 7.500h6" stroke="#444" /></svg>
          <svg width="14" height="14" className="ml-[13px] shrink-0"><path d="M1 13L13 1" stroke="#555" /></svg>
          <svg width="15" height="15" viewBox="0 0 15 15" className="ml-[9px] shrink-0"><path d="M7 8l-6 6" stroke="#2f62b8" strokeWidth="3" /><circle cx="9.500" cy="5" r="4" fill="#dff0ff" stroke="#3b72d0" strokeWidth="1.600" /></svg>
          <svg width="22" height="16" viewBox="0 0 22 16" className="ml-[12px] shrink-0" fill="#f2f2f2" stroke="#888"><path d="M9 6a6 4.500 0 0 1 12 0 5 4 0 0 1-4 4l1 2-3-2q-6 0-6-4z" /><path d="M1 10a4 3.500 0 0 1 9 0q0 3-5 3l-3 2 1-2q-2-1-2-3z" /></svg>
        </div>
        <div className="flex h-[608px] shrink-0 bg-[#6b6b6b] pl-px">
          <div className="flex w-[455px] flex-col">
            <div className="flex h-[311px] flex-col"><Child wide title="#SBER,H4" w={50} kinds={["tray", "min", "max", "close"]}><ChartH4 /></Child></div>
            <div className="flex flex-1 flex-col"><Child wide title="#SBER,D1" w={50}><ChartBottomLeft /></Child></div>
          </div>
          <div className="flex flex-1 flex-col overflow-hidden">
            <div className="flex h-[311px] flex-col"><Child title="#SBER,M1" w={52}><ChartM1 /></Child></div>
            <div className="flex flex-1 flex-col"><Child title="#SBER,M30" w={59}><ChartM30 /></Child></div>
          </div>
        </div>
        <div className="flex h-[22px] shrink-0 items-center border-t border-black pb-[2px] pl-[16px] text-xs text-[#777]">
          {chartTabs.map(([t, w]) => (
            <span key={t} className="flex items-center"><Fit w={w}>{`#SBER,${t}`}</Fit><i className="mr-[10px] ml-[11px] h-[14px] w-px bg-[#666]" /></span>
          ))}
          <span className="w-[25px] overflow-hidden"><Fit w={50}>#SBER,M5</Fit></span>
          <svg width="4" height="7" className="ml-[4px] shrink-0"><path d="M4 0v7L0 3.500z" fill="#888" /></svg>
          <svg width="4" height="7" className="ml-[15px] shrink-0"><path d="M0 0v7L4 3.500z" fill="#000" /></svg>
        </div>
        <footer className="flex h-[21px] shrink-0 items-center border-t border-[#ddd] pt-px pl-[2px] text-xs text-black">
          <Fit w={92}>For Help, press F1</Fit>
          <i className="ml-[80px] h-[18px] w-px bg-[#999]" /><Fit w={38} className="ml-[5px]">Default</Fit>
          <i className="ml-[72px] h-[18px] w-px bg-[#999]" /><i className="ml-[101px] h-[18px] w-px bg-[#999]" /><i className="ml-[70px] h-[18px] w-px bg-[#999]" />
          <i className="ml-[70px] h-[18px] w-px bg-[#999]" /><i className="ml-[67px] h-[18px] w-px bg-[#999]" /><i className="ml-[44px] h-[18px] w-px bg-[#999]" />
          <svg width="15" height="15" className="mt-1 ml-auto shrink-0" stroke="#888"><path d="M0 15L15 0M4 15L15 4M8 15l7-7M12 15l3-3" /></svg>
        </footer>
      </div>
    </section>
  );
}

/* ---------- MFC window ---------- */
const leaves: [string, number][] = [["Account", 45], ["Lengths", 43], ["Futures", 39], ["Alligator settings 1", 98], ["Alligator settings 2", 98], ["Period", 34], ["Trade SR", 46], ["Test without quotes", 105]];
function MfcWindow() {
  return (
    <section className="absolute top-[151px] left-[85px] flex h-[509px] w-[858px] flex-col rounded-t-md border border-[#4b4b4b] bg-[#d8e4f1] bg-linear-to-b from-[#bccad9] to-[#d8e4f1] to-[30px] px-[7px] pt-px pb-[7px] shadow-[inset_1px_1px_0_#e8f0f8]">
      <header className="flex h-[28px] shrink-0 items-center pt-[5px] pr-[2px] pl-[2px] text-xs text-[#3e4450]">
        <MtqcIcon /><Fit w={71} className="ml-1">MTQC - MFC</Fit><CapButtons />
      </header>
      <nav className="flex h-[20px] shrink-0 items-center gap-[14px] border-b border-[#aaa] bg-linear-to-b from-white to-[#d3daee] to-50% pl-[7px] text-xs text-[#6d6d6d]">
        <Fit w={18}>File</Fit><Fit w={25}>View</Fit><Fit w={25}>Help</Fit>
      </nav>
      <div className="flex h-[432px] shrink-0 gap-[4px] bg-[#f0f0f0] pt-px text-xs text-black">
        <div className="w-[203px] border-2 border-[#e3e3e3] border-t-[#696969] border-l-[#696969] bg-white">
          <div className="flex h-[17px] items-center pl-[7px]">
            <svg width="32" height="17" viewBox="0 0 32 17" fill="none" shapeRendering="crispEdges"><rect x=".5" y="4.500" width="8" height="8" rx="1" fill="#f6f6f6" stroke="#919191" /><path d="M2 8.500h5" stroke="#3b5a99" /><path d="M10 8.500h5" stroke="#777" strokeDasharray="1 1" /><circle cx="23" cy="8" r="5" fill="#00f" shapeRendering="auto" /></svg>
            <Fit w={53} className="ml-[4px]">Constants</Fit>
          </div>
          {leaves.map(([t, w], i) => (
            <div key={t} className="flex h-[18px] items-center pl-[30px]">
              <svg width="24" height="18" fill="none" shapeRendering="crispEdges">
                <path d={i === 7 ? "M.5 0V10" : "M.5 0V18"} stroke="#777" strokeDasharray="1 1" /><path d="M1 10.500h10" stroke="#777" strokeDasharray="1 1" />
                {t === "Futures"
                  ? <><rect x="18.500" y="5.500" width="5" height="5" fill="#00f" stroke="#0ff" /><rect x="15.500" y="7.500" width="5" height="5" fill="#00f" stroke="#0ff" /></>
                  : <rect x="15.500" y="5.500" width="7" height="7" fill="#00f" stroke="#0ff" />}
              </svg>
              <Fit w={w} className="ml-[8px]">{t}</Fit>
            </div>
          ))}
        </div>
        <div className="flex-1 border-2 border-[#e3e3e3] border-t-[#696969] border-l-[#696969] bg-white">
          <div className="flex h-[22px] items-center border-b border-[#d5d5d5] bg-linear-to-b from-white to-[#f2f2f4] pl-[6px]">
            <Fit w={82}>Constant name</Fit><i className="ml-[111px] h-[22px] w-px bg-[#dedfe1]" /><Fit w={80} className="ml-[6px]">Constant value</Fit><i className="ml-[14px] h-[22px] w-px bg-[#dedfe1]" />
          </div>
          {([["Futures fractional", 92, "false", 25], ["Contract size", 69, "100", 18]] as [string, number, string, number][]).map(([a, w, b, v]) => (
            <div key={a} className="flex h-[19px] items-center pt-[2px] pl-[7px]">
              <i className="size-[10px] rounded-full bg-[#00f]" /><span className="ml-[5px] flex w-[184px]"><Fit w={w}>{a}</Fit></span><Fit w={v}>{b}</Fit>
            </div>
          ))}
        </div>
      </div>
      <footer className="flex h-[19px] shrink-0 items-center border-t border-[#999] bg-[#f0eded] pt-px pl-[2px] text-xs text-black">
        <Fit w={32}>Ready</Fit><i className="ml-auto h-4 w-px bg-[#d0cccc]" /><Fit w={28} className="ml-[4px]">NUM</Fit><i className="ml-[4px] h-4 w-px bg-[#d0cccc]" /><i className="ml-[34px] h-4 w-px bg-[#d0cccc]" />
        <svg width="18" height="14" fill="#aaa"><path d="M14 4h2v2h-2zM14 8h2v2h-2zM14 12h2v2h-2zM10 8h2v2h-2zM10 12h2v2h-2zM6 12h2v2H6z" /></svg>
      </footer>
    </section>
  );
}

/* ---------- WinAPI dialog ---------- */
const Field = ({ v, w, wide = "w-[118px]" }: { v: string; w: number; wide?: string }) => (
  <div className={`flex h-[22px] shrink-0 items-center border border-t-2 border-l-2 border-[#e3e3e3] border-t-[#7c7c7c] border-l-[#7c7c7c] bg-white pb-px pl-[3px] shadow-[1px_1px_0_#fff] ${wide}`}><Fit w={w}>{v}</Fit></div>
);
const Row = ({ label, lw, v, w, h, lab = "w-[81px]", wide }: { label: string; lw: number; v: string; w: number; h: string; lab?: string; wide?: string }) => (
  <div className={`flex items-start ${h}`}><div className={lab}><Fit w={lw} className="leading-[14px]">{label}</Fit></div><Field v={v} w={w} wide={wide} /></div>
);
function Group({ title, tw, className, children }: { title: string; tw: number; className: string; children: React.ReactNode }) {
  return (
    <div className={`relative border border-[#a0a0a0] shadow-[1px_1px_0_#fff,inset_1px_1px_0_#fff] ${className}`}>
      <span className="absolute -top-[7px] left-[5px] bg-[#f0f0f0] px-[2px] leading-[14px]"><Fit w={tw}>{title}</Fit></span>
      {children}
    </div>
  );
}
const Radio = ({ on }: { on?: boolean }) => (
  <svg width="12" height="12" className="shrink-0"><circle cx="6" cy="6" r="5" fill="#fff" stroke="#d8d8d8" /><path d="M2.500 9.500a5 5 0 0 1 7-7" fill="none" stroke="#666" strokeWidth="1.300" />{on && <circle cx="6" cy="6" r="2" />}</svg>
);
const Check = ({ on }: { on?: boolean }) => (
  <span className="flex size-[12px] shrink-0 items-center justify-center border border-t-2 border-l-2 border-[#e3e3e3] border-t-[#777] border-l-[#777] bg-white">
    {on && <svg width="8" height="8"><path d="M.5 3.500l2.500 2.500 4.500-4.500" stroke="#000" strokeWidth="2" fill="none" /></svg>}
  </span>
);
function Dialog() {
  return (
    <section className={`absolute top-[268px] left-[622px] flex h-[262px] w-[597px] flex-col rounded-t-md border border-black bg-linear-to-b from-[#99b4d1] to-[#b9d1ea] to-[30px] px-[7px] pb-[7px] shadow-[inset_-1px_-1px_0_#35c5d8,inset_1px_1px_0_#dceaf6] ${TAHOMA}`}>
      <header className={`flex h-[29px] shrink-0 items-center pt-[6px] pr-[2px] pl-[2px] text-xs text-[#101828] ${SEGOE}`}>
        <MtqcIcon /><Fit w={86} className="ml-1">MTQC - WinAPI</Fit><CapButtons active />
      </header>
      <div className="flex h-[224px] gap-[17px] bg-[#f0f0f0] pt-[18px] pl-[11px] text-[11px] text-black">
        <div className="w-[214px]">
          <Group title="Account" tw={39} className="h-[106px] pt-[20px] pl-[6px]">
            <Row label="Class code:" lw={54} v="SPBFUT" w={37} h="h-[28px]" />
            <Row label="Stock:" lw={29} v="SBER" w={25} h="h-[27px]" />
            <Row label="Futures:" lw={40} v="SRZ7" w={26} h="h-[27px]" />
          </Group>
          <Group title="Lots" tw={21} className="mt-[12px] h-[76px] pt-[13px] pl-[6px]">
            <Row label="Traded:" lw={37} v="1" w={6} h="h-[29px]" />
            <Row label="Max:" lw={23} v="10" w={12} h="h-[29px]" />
          </Group>
        </div>
        <div className="w-[328px]">
          <Group title="Trading stock" tw={65} className="flex h-[106px] pt-[20px] pl-[11px]">
            <div className="w-[102px]">
              <div className="-mt-[6px] flex h-[28px] items-center gap-[5px]"><Radio on /><Fit w={27}>Stock</Fit></div>
              <div className="flex h-[29px] items-center gap-[5px]"><Radio /><Fit w={38}>Futures</Fit></div>
            </div>
            <div>
              <Row label="Point:" lw={28} v="0.0100000" w={52} h="h-[28px]" lab="w-[88px]" wide="w-[116px]" />
              <Row label="Price tag:" lw={46} v="PriceSBER" w={48} h="h-[27px]" lab="w-[88px]" wide="w-[116px]" />
              <div className="flex items-start">
                <div className="-mt-px w-[88px]"><Fit w={62} className="leading-[14px]">Alligator tag:</Fit></div>
                <Field v="AlgSBER" w={40} wide="w-[116px]" />
              </div>
            </div>
          </Group>
          <div className="mt-[14px] flex pl-[12px]">
            <div className="w-[102px]">
              <div className="mt-px flex h-[14px] items-center gap-[5px]"><Check on /><Fit w={70}>Trade disabled</Fit></div>
              <div className="mt-[19px] flex h-[14px] items-center gap-[5px]"><Check /><Fit w={61}>All messages</Fit></div>
            </div>
            <Row label="Resume range:" lw={73} v="2" w={6} h="h-[51px]" lab="w-[88px]" wide="w-[116px]" />
          </div>
          <div className="flex justify-end gap-[4px]">
            <button className="flex h-[24px] w-[72px] items-center justify-center border-2 border-[#696969] border-t-[#777] border-l-[#777] bg-[#f0f0f0] shadow-[inset_1px_1px_0_#fff,inset_-1px_-1px_0_#a0a0a0]"><Fit w={15}>OK</Fit></button>
            <button className="flex h-[24px] w-[72px] items-center justify-center border border-t-white border-r-[#696969] border-b-[#696969] border-l-white bg-[#f0f0f0] shadow-[inset_-1px_-1px_0_#a0a0a0]"><Fit w={32}>Cancel</Fit></button>
          </div>
        </div>
      </div>
    </section>
  );
}

/* ---------- taskbar ---------- */
const Slot = ({ children, w = "w-[44px]" }: { children: React.ReactNode; w?: string }) => <span className={`flex shrink-0 items-center justify-center ${w}`}>{children}</span>;
function Task({ icon, text, w, lit }: { icon: React.ReactNode; text: string; w: number; lit?: boolean }) {
  return (
    <div className={`flex h-[29px] w-[133px] shrink-0 items-center gap-[5px] rounded-[3px] border border-[#4d5b70] pb-[2px] pl-[8px] text-xs text-white shadow-[inset_0_0_0_1px_#c0cad6] ${lit ? "bg-linear-to-br from-[#eef2f6] to-[#9fafc2]" : "bg-linear-to-b from-[#a9b5c4] to-[#74869f]"}`}>
      {icon}<Fit w={w}>{text}</Fit>
    </div>
  );
}
const Vs = () => (
  <svg width="17" height="16" viewBox="0 0 17 16" className="shrink-0" fill="none" stroke="#7b50c8">
    <path d="M12.500 3L2 11.500V4.500L12.500 13" strokeWidth="2.200" strokeLinejoin="round" />
    <path d="M11.500 .8L16 2.800v10.400l-4.500 2z" fill="#7b50c8" stroke="none" />
  </svg>
);
const Office = ({ c, l }: { c: string; l: string }) => (
  <svg width="16" height="16" className="shrink-0"><rect x="7" y="2.500" width="8.500" height="11" fill="#fff" stroke={c} /><path d="M10 5.500h4M10 8h4M10 10.500h4" stroke={c} /><path d="M0 1.500L10 0v16L0 14.500z" fill={c} /><text x="1.500" y="11.500" fontSize="9" fontWeight="700" fill="#fff" fontFamily="Liberation Sans, sans-serif" textLength="7" lengthAdjust="spacingAndGlyphs">{l}</text></svg>
);
function Taskbar() {
  return (
    <div className="absolute bottom-0 left-0 flex h-[30px] w-full items-center border-t border-[#5b6878] bg-linear-to-b from-[#93a3b6] to-[#7e91a9] to-30%">
      <div className="w-[56px] shrink-0 pl-[8px]">
        <svg width="38" height="38" viewBox="0 0 38 38" className="-mt-[4px] block">
          <defs>
            <radialGradient id="orb" cy=".85"><stop offset="0" stopColor="#35d0f4" /><stop offset=".5" stopColor="#1d6ba8" /><stop offset="1" stopColor="#163a66" /></radialGradient>
            <linearGradient id="gloss" x2="0" y2="1"><stop offset="0" stopColor="#fff" stopOpacity=".85" /><stop offset="1" stopColor="#fff" stopOpacity=".15" /></linearGradient>
          </defs>
          <circle cx="19" cy="19" r="17.500" fill="url(#orb)" stroke="#2a4a6a" />
          <path d="M4 15a15.500 13 0 0 1 30 0q-15 8-30 0z" fill="url(#gloss)" />
          <path d="M11 11q4-3 7.500 0l-1.500 7q-4-2.500-7.500-.5z" fill="#f0562a" /><path d="M20 11.500q4 2 7.500 0L26 19q-4 1.500-7.500-.5z" fill="#8cc83c" />
          <path d="M9 19q4-2 7.500.5L15 26q-3.500-3-7-.5z" fill="#3f9fe8" /><path d="M18 20q4 2.500 7.500.5L24 27q-4 1.500-7.500-.5z" fill="#fcc927" />
        </svg>
      </div>
      <Slot><svg width="16" height="16"><path d="M0 0h14l2 2v14H0z" fill="#2434b8" /><path d="M3 0h9v5H3z" fill="#d8dcf0" /><path d="M9 1h2v3H9z" fill="#2434b8" /><path d="M2 7h12v8H2z" fill="#fff" /><path d="M3 9.500h10M3 12.500h10" stroke="#e02020" strokeWidth="1.500" /></svg></Slot>
      <Slot><svg width="15" height="15" viewBox="0 0 15 15"><circle cx="7.500" cy="7.500" r="7.200" fill="#fbc116" /><path d="M1.200 4a7.200 7.200 0 0 1 12.700 0H7.500L4 9z" fill="#e33b2e" /><path d="M1.200 4A7.200 7.200 0 0 0 7 14.700L10 9l-5 1z" fill="#2da94f" /><circle cx="7.500" cy="7.500" r="3.400" fill="#fff" /><circle cx="7.500" cy="7.500" r="2.600" fill="#3b78e7" /></svg></Slot>
      {[0, 1].map((i) => <Slot key={i}><span className="font-['Roboto',sans-serif] text-[14px] font-bold text-[#1794cf]"><Fit w={16}>QS</Fit></span></Slot>)}
      <Slot><QuikIcon /></Slot>
      <div className="ml-[1px] flex gap-[3px]">
        <Task icon={<QuikIcon />} text="[UID: 96087] Ин..." w={91} />
        <Task icon={<InstaIcon />} text="3015138: InstaFo..." w={95} />
      </div>
      <Slot><svg width="16" height="16"><rect x="1" y="1" width="15" height="15" rx="3" fill="#272727" /><path d="M0 7a7 7 0 0 1 7-7l1 3-5 4z" fill="#d02030" /><path d="M5 7.500l1.500 4L8.500 8l2 3.500 1.800-4" stroke="#fff" strokeWidth="1.600" fill="none" /></svg></Slot>
      <Slot w="w-[43px]"><Vs /></Slot>
      <Slot w="w-[43px]"><Office c="#1e7145" l="X" /></Slot>
      <Slot w="w-[43px]"><Office c="#2b579a" l="W" /></Slot>
      <Slot w="w-[43px]"><Office c="#0f6fc0" l="O" /></Slot>
      <Slot w="w-[43px]"><svg width="16" height="16"><rect width="16" height="16" fill="#c8c4bc" /><path d="M12 4Q6 1 3.500 7q-1.500 6 5.500 5" stroke="#111" strokeWidth="1.800" fill="none" /><path d="M7 9h5l-2.500 5" stroke="#111" strokeWidth="1.500" fill="none" /><path d="M1 15L9 9" stroke="#c01818" strokeWidth="1.200" /><rect x="11" y="1" width="3" height="3" fill="#1cd" /></svg></Slot>
      <Slot w="w-[43px]"><svg width="17" height="14"><path d="M0 11.500h13" stroke="#222" strokeWidth="2.500" /><rect x="1.500" y="1.500" width="10" height="7" fill="#3878d0" stroke="#ddd" /><path d="M7 5.500h9M7 8h5" stroke="#555" strokeWidth="3" /><path d="M7 5.500h8M7 8h4" stroke="#f0ece0" strokeWidth="1.500" /></svg></Slot>
      <div className="ml-[2px] flex gap-[2px]">
        <Task icon={<MtqcIcon />} text="MTQC - MFC" w={71} />
        <Task icon={<MtqcIcon />} text="MTQC - WinAPI" w={84} lit />
      </div>
      <Fit w={14} className="-mt-[5px] ml-[10px] text-xs text-white">EN</Fit>
      <svg width="8" height="5" className="ml-[17px] shrink-0"><path d="M0 5h8L4 0z" fill="#fff" stroke="#333" strokeWidth=".5" /></svg>
      <span className="ml-[10px] flex h-[28px] w-[22px] shrink-0 items-center justify-center border-x border-[#a5b3c4] bg-linear-to-b from-transparent from-60% to-[#b4d2f2]">
        <svg width="16" height="13" viewBox="0 0 16 13"><path d="M3 2l3-1h5q4 2 4 8l1 3H5q1-2-1-4L2 6z" fill="#f8f4f4" stroke="#555" strokeWidth=".6" /><path d="M1 1l3 2M0 4h4M3 8l3 3M1 7h3" stroke="#6a3a3a" strokeWidth="1.400" /></svg>
      </span>
      <svg width="16" height="13" viewBox="0 0 16 13" className="ml-[5px] shrink-0"><path d="M4 12a3.500 3.500 0 0 1 0-7 4.500 4.500 0 0 1 8.500 0 3.500 3.500 0 0 1 0 7z" fill="#fff" stroke="#2a70dd" /><path d="M8 11V6M5.500 8L8 5.500 10.500 8" stroke="#1a62e0" strokeWidth="1.800" fill="none" /></svg>
      <span className="ml-[7px]"><Vs /></span>
      <svg width="12" height="13" className="ml-[10px] shrink-0"><rect x=".5" y=".5" width="11" height="12" fill="#0a8a0a" stroke="#eee" /><path d="M1 3.500h10M1 6.500h10M1 9.500h10M3.500 1v11M6.500 1v11M9.500 1v11" stroke="#032b03" /></svg>
      <Fit w={28} className="ml-auto text-xs text-white">13:46</Fit>
      <i className="ml-[24px] h-[29px] w-[15px] shrink-0 border border-[#3f4e60] bg-linear-to-br from-[#8d9caf] via-[#566880] to-[#98a8ba]" />
    </div>
  );
}

export default function App() {
  return (
    <main className={`relative h-[768px] w-[1366px] overflow-hidden bg-[#1a56a0] ${SEGOE} leading-normal`}>
      <QuikWindow />
      <Ladder />
      <InstaWindow />
      <MfcWindow />
      <Dialog />
      <Taskbar />
      <div className="absolute top-[720px] left-[1184px] flex h-[20px] w-[105px] items-center justify-center rounded-[3px] border border-[#767676] bg-linear-to-b from-white to-[#e4e5f0] text-xs text-[#575757] shadow-[2px_2px_3px_#0008]">
        <Fit w={92}>Micro-break: 0:47</Fit>
      </div>
    </main>
  );
}
